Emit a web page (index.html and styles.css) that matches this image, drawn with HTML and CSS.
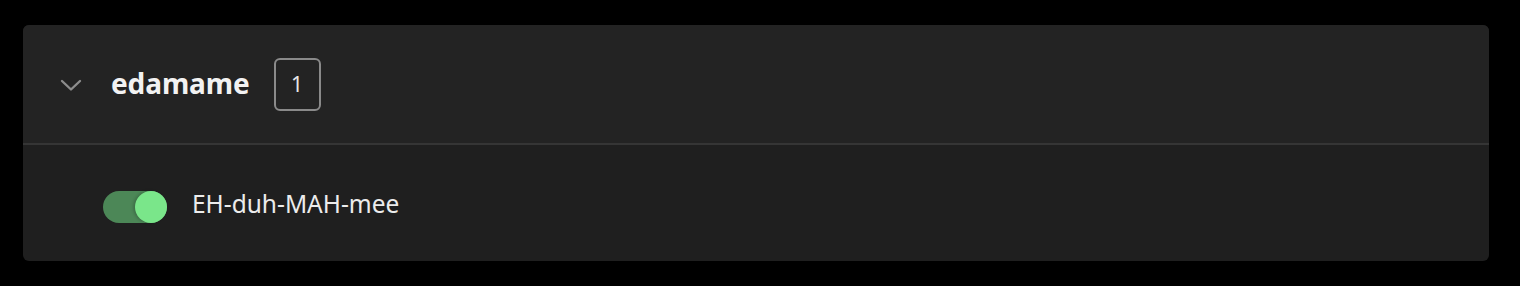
FILE: index.html
```html
<!DOCTYPE html>
<html>
<head>
<meta charset="utf-8">
<link rel="stylesheet" href="styles.css">
</head>
<body>
<section class="card">
  <header class="card-head">
    <span class="chev">
      <svg width="24" height="24" viewBox="0 0 24 24"><path d="M3 8 L12 16.5 L21 8" fill="none" stroke="#8c8c8c" stroke-width="2.4" stroke-linecap="round" stroke-linejoin="round"/></svg>
    </span>
    <h2 class="title">edamame</h2>
    <span class="badge">1</span>
  </header>
  <div class="card-body">
    <span class="toggle"><span class="knob"></span></span>
    <span class="label">EH-duh-MAH-mee</span>
  </div>
</section>
</body>
</html>
```
FILE: styles.css
```css
html, body {
  margin: 0;
  padding: 0;
  background: #000;
}
body {
  padding: 25px 31px 25px 23px;
  font-family: "Noto Sans", "Open Sans", sans-serif;
  color: #eeeeee;
}
.card {
  background: #1f1f1f;
  border-radius: 6px;
  overflow: hidden;
  height: 236px;
  display: flex;
  flex-direction: column;
}
.card-head {
  background: #232323;
  height: 118px;
  border-bottom: 2px solid #353535;
  display: flex;
  align-items: center;
  padding-left: 36px;
  box-sizing: content-box;
}
.chev {
  width: 24px;
  height: 24px;
  display: flex;
  margin-top: 2px;
}
.title {
  margin: -3px 0 0 28px;
  font-size: 28px;
  font-weight: 700;
  color: #f2f2f2;
  line-height: 1;
  letter-spacing: -0.1px;
}
.badge {
  margin-left: 24px;
  width: 43px;
  height: 49px;
  border: 2px solid #8a8a8a;
  border-radius: 6px;
  display: flex;
  align-items: center;
  justify-content: center;
  font-size: 21px;
  font-weight: 400;
  color: #e6e6e6;
}
.card-body {
  flex: 1;
  display: flex;
  align-items: center;
  padding: 0 0 0 80px;
}
.toggle {
  width: 64px;
  height: 32px;
  border-radius: 16px;
  background: #4c8757;
  display: flex;
  justify-content: flex-end;
  margin-top: 7px;
}
.knob {
  width: 32px;
  height: 32px;
  border-radius: 50%;
  background: #7ae68a;
  box-shadow: -2px 0 3px rgba(0,0,0,0.18);
}
.label {
  margin-left: 25px;
  font-size: 24.5px;
  color: #ececec;
  line-height: 1;
  margin-top: 2px;
}
```
